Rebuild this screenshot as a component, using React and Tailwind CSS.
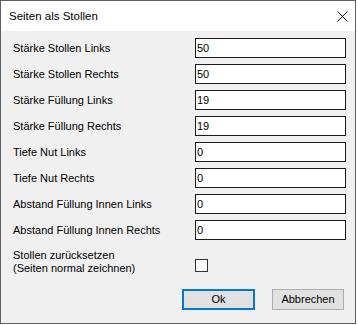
const FIELDS = [
  { label: 'Stärke Stollen Links', value: '50' },
  { label: 'Stärke Stollen Rechts', value: '50' },
  { label: 'Stärke Füllung Links', value: '19' },
  { label: 'Stärke Füllung Rechts', value: '19' },
  { label: 'Tiefe Nut Links', value: '0' },
  { label: 'Tiefe Nut Rechts', value: '0' },
  { label: 'Abstand Füllung Innen Links', value: '0' },
  { label: 'Abstand Füllung Innen Rechts', value: '0' },
];

const font = "font-['Liberation_Sans',Arial,sans-serif]";

export default function App() {
  return (
    <div className={`w-[358px] h-[325px] bg-white ${font}`}>
      <div className="w-[356px] h-[324px] border border-[#5f5f5f] bg-[#f0f0f0] flex flex-col">
        {/* title bar */}
        <div className="h-[30px] bg-white flex items-center justify-between pl-[8px] pr-[7px]">
          <span className="text-[11.5px] text-black pt-[1px]">Seiten als Stollen</span>
          <svg width="11" height="11" viewBox="0 0 11 11" className="mt-[1px]">
            <path d="M0.5 0.5 L10.5 10.5 M10.5 0.5 L0.5 10.5" stroke="#111" strokeWidth="1" fill="none" />
          </svg>
        </div>

        {/* content */}
        <div className="flex flex-col pl-[12px] pt-[7px]">
          <div className="flex flex-col gap-[6px]">
            {FIELDS.map((f) => (
              <div key={f.label} className="flex items-center h-[20px]">
                <span className="w-[182px] text-[11px] text-black">{f.label}</span>
                <div className="w-[151px] h-[20px] border border-[#1a1a1a] bg-white flex items-center pl-[1px] text-[11px] text-black">
                  {f.value}
                </div>
              </div>
            ))}
          </div>

          <div className="flex items-start mt-[9px]">
            <div className="w-[182px] text-[11px] leading-[13px] text-black">
              <div>Stollen zurücksetzen</div>
              <div>(Seiten normal zeichnen)</div>
            </div>
            <div className="w-[13px] h-[13px] mt-[10px] border border-[#333] bg-white" />
          </div>

          <div className="flex gap-[17px] mt-[14px] pl-[169px]">
            <button className="w-[73px] h-[21px] border-2 border-[#0078d7] bg-[#e1e1e1] text-[11px] text-black flex items-center justify-center">
              Ok
            </button>
            <button className="w-[72px] h-[21px] border border-[#adadad] bg-[#e1e1e1] text-[11px] text-black flex items-center justify-center">
              Abbrechen
            </button>
          </div>
        </div>
      </div>
    </div>
  );
}
